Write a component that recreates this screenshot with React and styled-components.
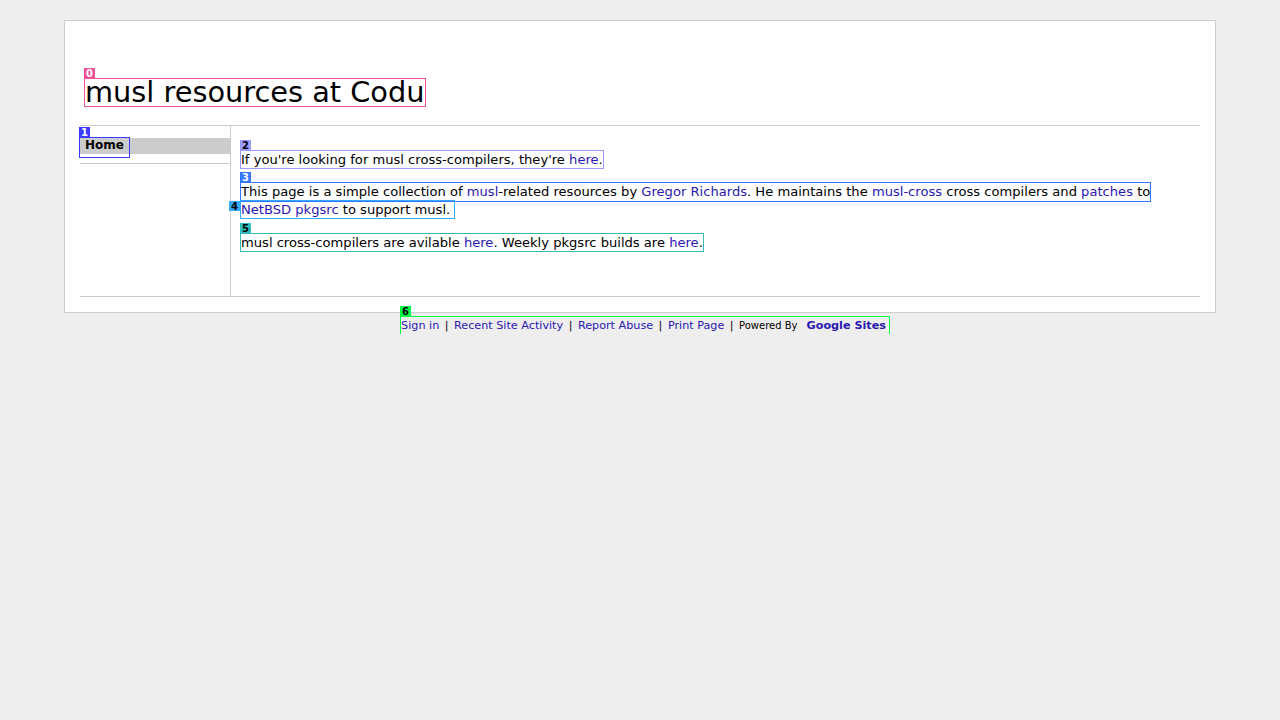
import React from "react";
import styled, { createGlobalStyle } from "styled-components";

const GlobalStyle = createGlobalStyle`
  body {
    margin: 0;
    background: #eeeeee;
    font-family: "DejaVu Sans", Verdana, sans-serif;
    color: #000000;
  }
`;

const marks = {
  0: { line: "#f0509a", fg: "#ffffff" },
  1: { line: "#3a3aff", fg: "#ffffff" },
  2: { line: "#9a9aff", fg: "#000000" },
  3: { line: "#3377ff", fg: "#ffffff" },
  4: { line: "#33aaff", fg: "#000000" },
  5: { line: "#33bbbb", fg: "#000000" },
  6: { line: "#00ff44", fg: "#000000" },
};

const Mark = ({ n, side, children }) => (
  <Marked $line={marks[n].line}>
    <Badge $bg={marks[n].line} $fg={marks[n].fg} $side={side}>
      {n}
    </Badge>
    {children}
  </Marked>
);

const App = () => {
  return (
    <>
      <GlobalStyle />
      <Page>
        <Wrapper>
          <Header>
            <Mark n={0}>
              <Title>musl resources at Codu</Title>
            </Mark>
          </Header>
          <Columns>
            <Sidebar>
              <NavBar>
                <Mark n={1}>
                  <NavLink>Home</NavLink>
                </Mark>
              </NavBar>
            </Sidebar>
            <Main>
              <Para>
                <Mark n={2}>
                  If you're looking for musl cross-compilers, they're{" "}
                  <A>here</A>.
                </Mark>
              </Para>
              <Para $gap={16}>
                <Line $h={18}>
                  <Mark n={3}>
                    This page is a simple collection of <A>musl</A>-related
                    resources by <A>Gregor Richards</A>. He maintains the{" "}
                    <A>musl-cross</A> cross compilers and <A>patches</A> to
                  </Mark>
                </Line>
                <Line $h={17}>
                  <Mark n={4} side>
                    <Tail>
                      <A>NetBSD</A> <A>pkgsrc</A> to support musl.&nbsp;
                    </Tail>
                  </Mark>
                </Line>
              </Para>
              <Para>
                <Mark n={5}>
                  musl cross-compilers are avilable <A>here</A>. Weekly pkgsrc
                  builds are <A>here</A>.
                </Mark>
              </Para>
            </Main>
          </Columns>
        </Wrapper>
        <Footer>
          <Mark n={6}>
            <FootLink>Sign in</FootLink>
            <Sep>|</Sep>
            <FootLink>Recent Site Activity</FootLink>
            <Sep>|</Sep>
            <FootLink>Report Abuse</FootLink>
            <Sep>|</Sep>
            <FootLink>Print Page</FootLink>
            <Sep>|</Sep>
            <Powered>Powered By</Powered>
            <Brand>Google Sites</Brand>
          </Mark>
        </Footer>
      </Page>
    </>
  );
};

export default App;

const Page = styled.div`
  padding: 20px 64px 0;
`;

const Wrapper = styled.div`
  border: 1px solid #cccccc;
  background: #ffffff;
  padding: 0 15px 15px;
`;

const Header = styled.div`
  display: flex;
  padding: 58px 0 19px 5px;
  border-bottom: 1px solid #cccccc;
`;

const Title = styled.h1`
  margin: 0;
  font-size: 28.8px;
  font-weight: normal;
  line-height: 27px;
  white-space: nowrap;
`;

const Marked = styled.span`
  position: relative;
  display: inline-block;
  vertical-align: top;
  outline: 1px solid ${({ $line }) => $line};
`;

const Badge = styled.span`
  position: absolute;
  ${({ $side }) =>
    $side ? "right: calc(100% + 1px); top: 0;" : "bottom: calc(100% + 1px); left: -1px;"}
  min-width: 6px;
  height: 10px;
  padding: 0 2px;
  background: ${({ $bg }) => $bg};
  color: ${({ $fg }) => $fg};
  font-size: 10px;
  font-weight: bold;
  line-height: 11px;
`;

const Columns = styled.div`
  display: flex;
  min-height: 170px;
  border-bottom: 1px solid #cccccc;
`;

const Sidebar = styled.div`
  width: 150px;
  flex-shrink: 0;
  border-right: 1px solid #cccccc;
`;

const NavBar = styled.div`
  display: flex;
  align-items: flex-start;
  margin: 12px 0 10px;
  height: 16px;
  background: #cccccc;
  position: relative;
  &::after {
    content: "";
    position: absolute;
    left: 0;
    right: 0;
    bottom: -10px;
    border-bottom: 1px solid #cccccc;
  }
`;

const NavLink = styled.span`
  display: block;
  margin-top: -1px;
  height: 20px;
  padding: 0 5px;
  font-size: 12px;
  font-weight: bold;
  line-height: 17px;
`;

const Main = styled.div`
  flex: 1;
  padding: 25px 10px 0;
  font-size: 13.1px;
  line-height: 17px;
`;

const Para = styled.div`
  margin-bottom: ${({ $gap }) => $gap || 15}px;
`;

const Line = styled.div`
  height: ${({ $h }) => $h}px;
  line-height: ${({ $h }) => $h}px;
  white-space: nowrap;
`;

const Tail = styled.span`
  display: block;
  margin-left: -1px;
  padding-left: 1px;
  line-height: 17px;
`;

const A = styled.span`
  color: #2a18b0;
`;

const Footer = styled.div`
  margin-top: 4px;
  padding-left: 10px;
  text-align: center;
  font-size: 11.2px;
  line-height: 17px;
`;

const FootLink = styled.span`
  color: #2a18b0;
`;

const Sep = styled.span`
  margin: 0 5.5px;
  color: #000000;
`;

const Powered = styled.span`
  font-size: 10px;
  margin-right: 9px;
`;

const Brand = styled.span`
  color: #2a18b0;
  font-weight: bold;
  font-size: 11.2px;
  margin-right: 3px;
`;
